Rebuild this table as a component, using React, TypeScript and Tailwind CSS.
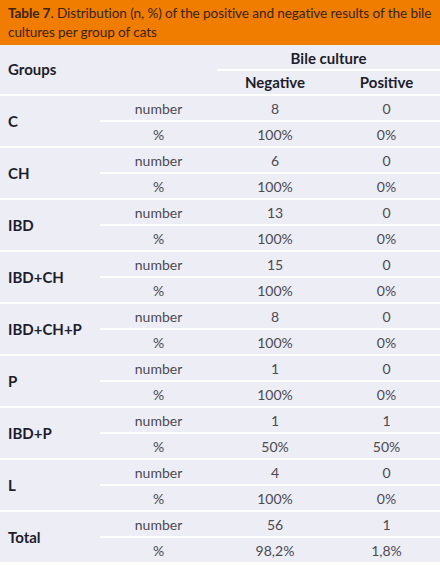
const groups: [string, string, string, string, string][] = [
  ["C", "8", "0", "100%", "0%"],
  ["CH", "6", "0", "100%", "0%"],
  ["IBD", "13", "0", "100%", "0%"],
  ["IBD+CH", "15", "0", "100%", "0%"],
  ["IBD+CH+P", "8", "0", "100%", "0%"],
  ["P", "1", "0", "100%", "0%"],
  ["IBD+P", "1", "1", "50%", "50%"],
  ["L", "4", "0", "100%", "0%"],
  ["Total", "56", "1", "98,2%", "1,8%"],
];

function SubRow({ label, neg, pos }: { label: string; neg: string; pos: string }) {
  return (
    <div className="grid h-[24px] grid-cols-[117px_116px_1fr] items-center text-center text-[14px] text-[#4a4a52]">
      <span>{label}</span>
      <span>{neg}</span>
      <span>{pos}</span>
    </div>
  );
}

export default function App() {
  return (
    <div className="w-[440px] bg-white font-['Lato',sans-serif]" style={{ height: 565 }}>
      <p className="h-[45px] bg-[#f07c00] pl-2 pr-0 pt-[4px] text-[13.6px] leading-[19px] tracking-[-0.1px] text-[#3b2410]">
        <span className="font-bold">Table 7</span>. Distribution (n, %) of the positive and negative results of the bile cultures per group of cats
      </p>
      <div className="bg-[#ededf5]">
        <div className="flex h-[51px] border-b-2 border-white">
          <div className="flex w-[217px] items-center pl-2 text-[15px] font-bold text-[#1d1d2b]">Groups</div>
          <div className="flex flex-1 flex-col text-[15px] font-bold text-[#1d1d2b]">
            <div className="flex h-[26px] items-center justify-center border-b-2 border-white pt-[2px]">Bile culture</div>
            <div className="grid flex-1 grid-cols-[116px_1fr] items-center text-center">
              <span>Negative</span>
              <span>Positive</span>
            </div>
          </div>
        </div>
        {groups.map(([name, n1, n2, p1, p2], i) => (
          <div key={name} className={`flex ${i < groups.length - 1 ? "border-b-2 border-white" : ""}`}>
            <div className="flex w-[100px] items-center pl-2 text-[15px] font-bold text-[#1d1d2b]">{name}</div>
            <div className="flex-1">
              <div className="border-b-2 border-white">
                <SubRow label="number" neg={n1} pos={n2} />
              </div>
              <SubRow label="%" neg={p1} pos={p2} />
            </div>
          </div>
        ))}
      </div>
    </div>
  );
}
